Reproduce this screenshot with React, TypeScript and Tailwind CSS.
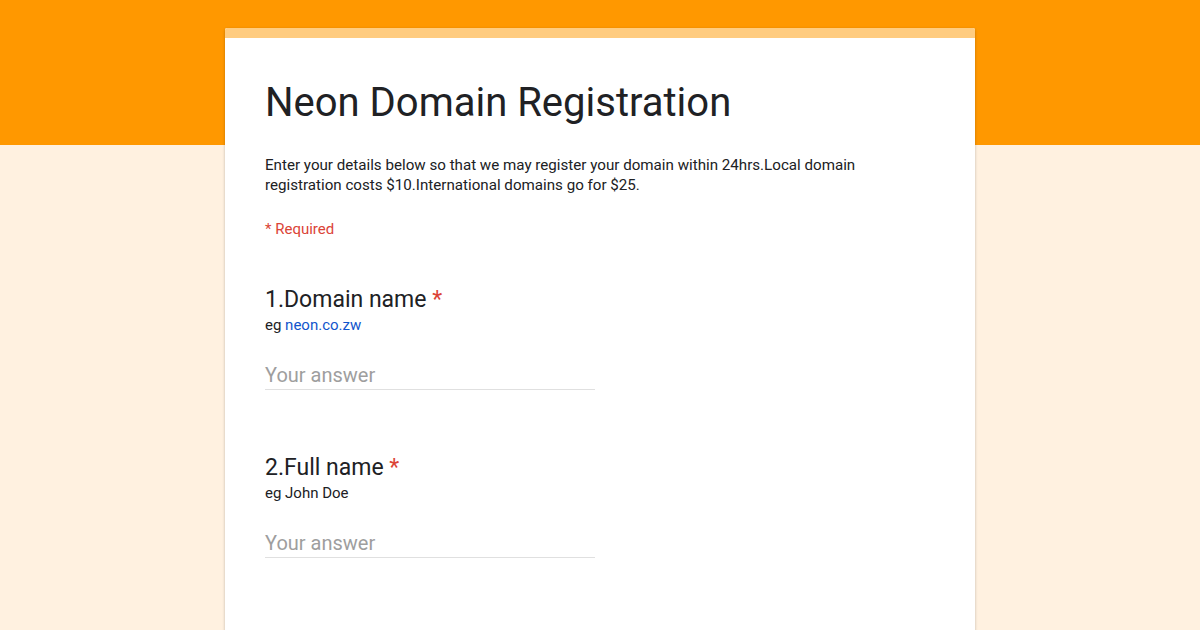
import type { ReactNode } from 'react'

function Question({ num, title, hint }: { num: number; title: string; hint: ReactNode }) {
  return (
    <div className="flex flex-col">
      <div className="text-[23px] leading-[30px] text-[#202124]">
        {num}.{title} <span className="text-[#db4437]">*</span>
      </div>
      <div className="mt-[1px] text-[15px] leading-[18px] text-[#202124]">{hint}</div>
      <div className="mt-[28px] w-[330px] border-b border-[#e0e0e0] pb-[1px] text-[20px] leading-[26px] text-[#9e9e9e]">
        Your answer
      </div>
    </div>
  )
}

export default function App() {
  return (
    <div className="relative h-[630px] w-[1200px] overflow-hidden bg-[#fff1e0] font-['Roboto',sans-serif]">
      <div className="h-[145px] w-full bg-[#ff9800]" />
      <div className="absolute left-[225px] top-[28px] h-[640px] w-[750px] overflow-hidden rounded-t-[2px] bg-white shadow-[0_1px_3px_rgba(0,0,0,0.25)]">
        <div className="h-[10px] bg-[#ffcc80]" />
        <div className="flex flex-col px-[40px] pt-[42px]">
          <h1 className="text-[40px] leading-[46px] text-[#202124]">Neon Domain Registration</h1>
          <p className="mt-[29px] w-[650px] text-[15.15px] leading-[20px] text-[#202124]">
            Enter your details below so that we may register your domain within 24hrs.Local domain registration costs $10.International domains go for $25.
          </p>
          <div className="mt-[24px] text-[15px] leading-[20px] text-[#db4437]">* Required</div>
          <div className="mt-[46px] flex flex-col gap-[63px]">
            <Question num={1} title="Domain name" hint={<>eg <span className="text-[#1155cc]">neon.co.zw</span></>} />
            <Question num={2} title="Full name" hint="eg John Doe" />
          </div>
        </div>
      </div>
    </div>
  )
}
